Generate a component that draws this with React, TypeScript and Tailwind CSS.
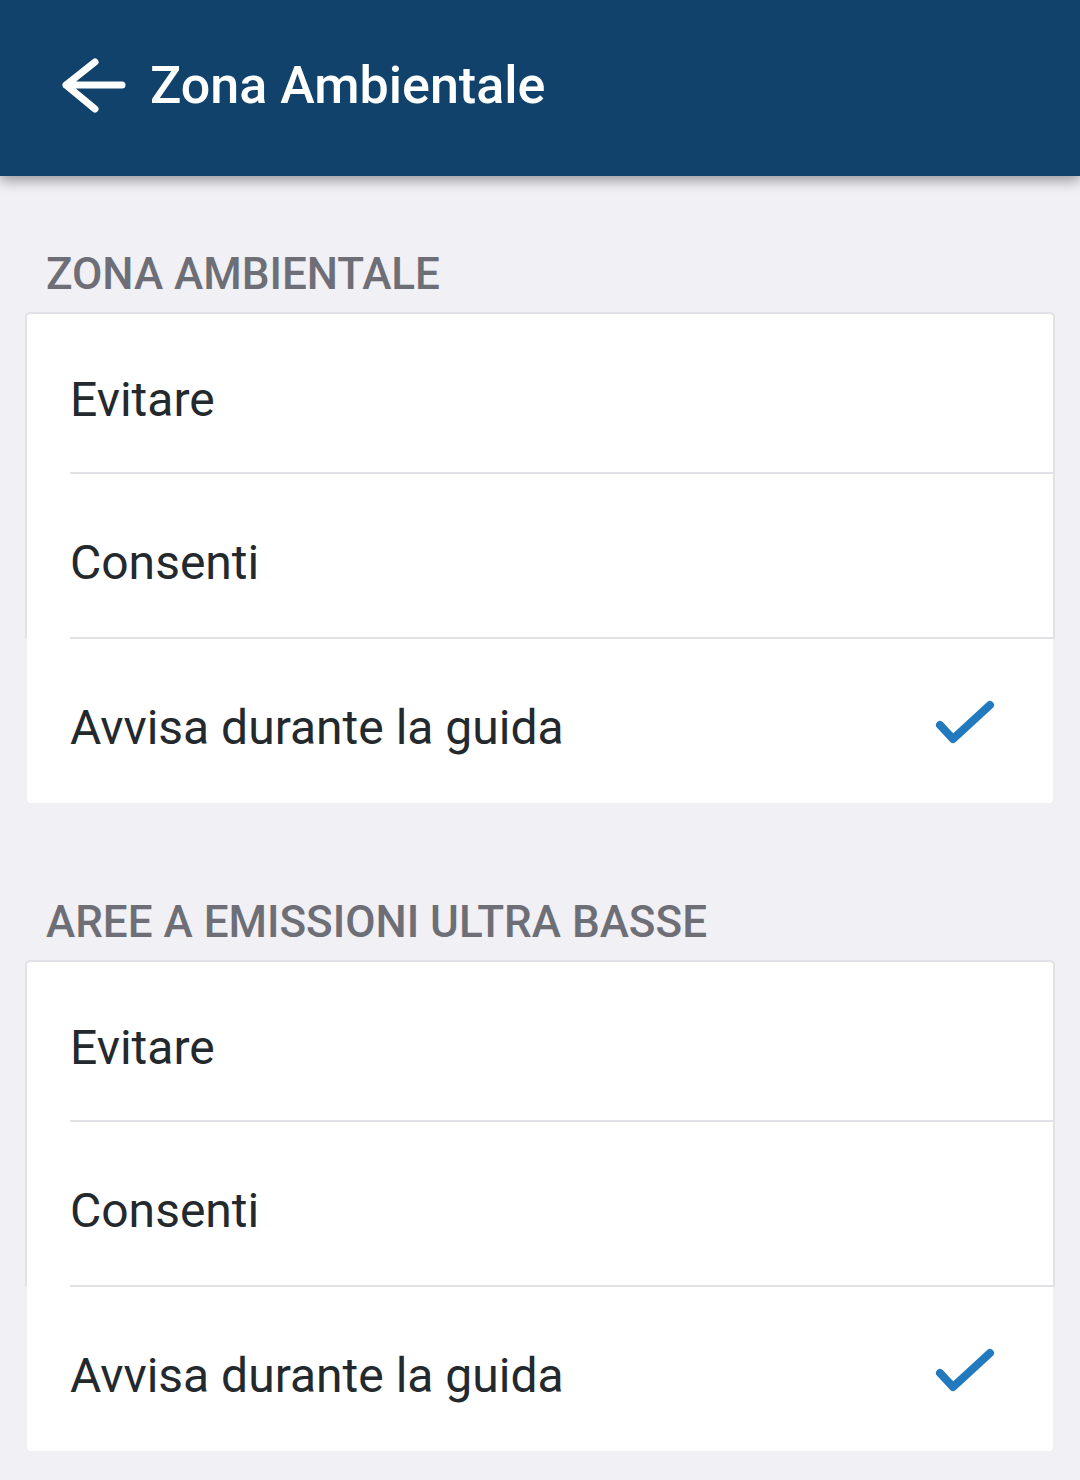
import React from "react";

type Row = { label: string; checked?: boolean };

const rows: Row[] = [
  { label: "Evitare" },
  { label: "Consenti" },
  { label: "Avvisa durante la guida", checked: true },
];

const sections = ["ZONA AMBIENTALE", "AREE A EMISSIONI ULTRA BASSE"];

const BackArrow = () => (
  <svg width="64" height="60" viewBox="0 0 64 60" fill="none">
    <path
      d="M4 29 H60 M4 29 L33 6 M4 29 L33 53"
      stroke="white"
      strokeWidth="7"
      strokeLinecap="round"
      strokeLinejoin="round"
    />
  </svg>
);

const Check = () => (
  <svg width="64" height="50" viewBox="0 0 64 50" fill="none" className="mt-[6px]">
    <path
      d="M9 26 L22 40 L59 6"
      stroke="#2379bd"
      strokeWidth="8"
      strokeLinecap="round"
      strokeLinejoin="round"
    />
  </svg>
);

const OptionCard = () => (
  <div className="mx-[25px]">
    <div className="bg-white border-x-2 border-t-2 border-[#e1e1e8] rounded-t-[5px]">
      {rows.slice(0, 2).map((row, i) => (
        <div key={row.label} className="pl-[43px]">
          <div
            className={`${i === 0 ? "h-[160px]" : "h-[165px]"} flex items-center border-b-2 border-[#e1e1e8]`}
          >
            <span className="mt-[14px] text-[48px] leading-none text-[#24292d]">{row.label}</span>
          </div>
        </div>
      ))}
    </div>
    <div className="px-[2px]">
      <div className="h-[164px] bg-white rounded-b-[4px] pl-[43px] pr-[58px] flex items-center justify-between">
        <span className="mt-[14px] text-[48px] leading-none text-[#24292d]">{rows[2].label}</span>
        {rows[2].checked && <Check />}
      </div>
    </div>
  </div>
);

const App = () => {
  return (
    <div className="w-[1080px] h-[1480px] bg-[#f0f0f5] font-['Roboto',sans-serif] overflow-hidden">
      <div className="relative z-10 h-[176px] bg-[#10426b] shadow-[0_5px_12px_rgba(0,0,0,0.35)] flex items-center pl-[62px] pb-[4px] gap-[24px]">
        <BackArrow />
        <h1 className="text-[52px] leading-none font-medium text-white">Zona Ambientale</h1>
      </div>
      {sections.map((title, i) => (
        <div key={title} className={i === 0 ? "mt-[76px]" : "mt-[97px]"}>
          <h2 className="pl-[46px] mb-[16px] text-[44px] leading-none font-medium text-[#6e6e76]">
            {title}
          </h2>
          <OptionCard />
        </div>
      ))}
    </div>
  );
};

export default App;
